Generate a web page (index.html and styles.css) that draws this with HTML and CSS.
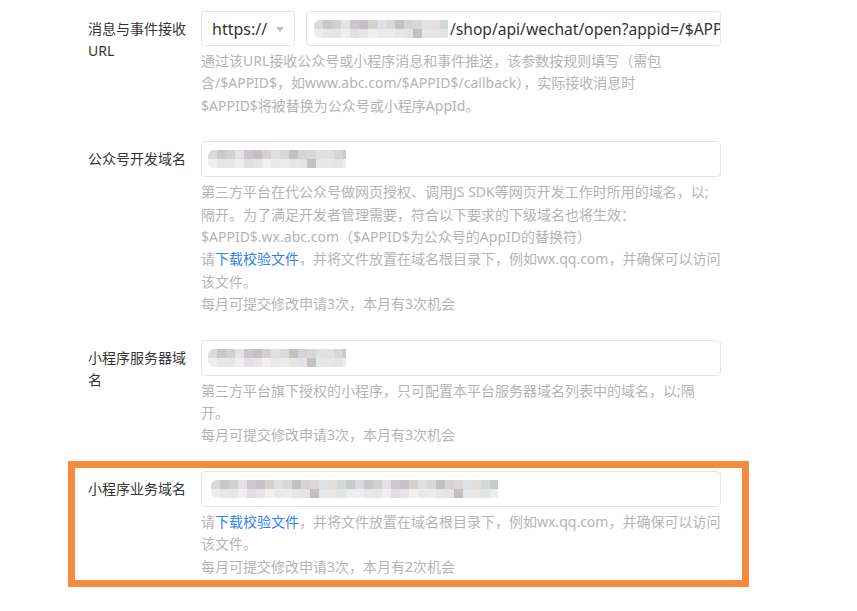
FILE: index.html
```html
<!DOCTYPE html>
<html lang="zh-CN">
<head>
    <meta charset="UTF-8">
    <meta name="viewport" content="width=device-width, initial-scale=1.0">
    <title>开发配置</title>
    <link rel="stylesheet" href="styles.css">
</head>
<body>

    <div class="form">

        <div class="form-row">
            <div class="form-label">消息与事件接收URL</div>
            <div class="form-control">
                <div class="input-group">
                    <div class="select">
                        <span>https://</span>
                        <i class="select-arrow"></i>
                    </div>
                    <div class="input input-url">
                        <span class="mosaic mosaic-url"></span>
                        <span class="input-text">/shop/api/wechat/open?appid=/$APPID$</span>
                    </div>
                </div>
                <div class="help">
                    <p>通过该URL接收公众号或小程序消息和事件推送，该参数按规则填写（需包含/$APPID$，如www.abc.com/$APPID$/callback），实际接收消息时<br>$APPID$将被替换为公众号或小程序AppId。</p>
                </div>
            </div>
        </div>

        <div class="form-row">
            <div class="form-label">公众号开发域名</div>
            <div class="form-control">
                <div class="input">
                    <span class="mosaic mosaic-short"></span>
                </div>
                <div class="help">
                    <p>第三方平台在代公众号做网页授权、调用JS SDK等网页开发工作时所用的域名，以;隔开。为了满足开发者管理需要，符合以下要求的下级域名也将生效：$APPID$.wx.abc.com（$APPID$为公众号的AppID的替换符）</p>
                    <p>请<a href="#">下载校验文件</a>，并将文件放置在域名根目录下，例如wx.qq.com，并确保可以访问该文件。</p>
                    <p>每月可提交修改申请3次，本月有3次机会</p>
                </div>
            </div>
        </div>

        <div class="form-row">
            <div class="form-label">小程序服务器域名</div>
            <div class="form-control">
                <div class="input">
                    <span class="mosaic mosaic-short"></span>
                </div>
                <div class="help">
                    <p>第三方平台旗下授权的小程序，只可配置本平台服务器域名列表中的域名，以;隔开。</p>
                    <p>每月可提交修改申请3次，本月有3次机会</p>
                </div>
            </div>
        </div>

        <div class="form-row marked">
            <div class="form-label">小程序业务域名</div>
            <div class="form-control">
                <div class="input">
                    <span class="mosaic mosaic-long"></span>
                </div>
                <div class="help">
                    <p>请<a href="#">下载校验文件</a>，并将文件放置在域名根目录下，例如wx.qq.com，并确保可以访问该文件。</p>
                    <p>每月可提交修改申请3次，本月有2次机会</p>
                </div>
            </div>
        </div>

    </div>

</body>
</html>
```

FILE: styles.css
```css
body {
    font-family: "Noto Sans", "Noto Sans CJK SC", sans-serif;
    font-size: 14px;
    color: #353535;
    background-color: #ffffff;
    margin: 0;
    padding: 0;
}

.form {
    padding: 11px 0 0 88px;
}

.form-row {
    display: flex;
    width: 633px;
    margin-bottom: 24px;
    position: relative;
}

.form-label {
    width: 100px;
    margin-right: 13px;
    padding-top: 7px;
    line-height: 22px;
    flex-shrink: 0;
}

.form-control {
    width: 520px;
}

.input-group {
    display: flex;
}

.select {
    width: 94px;
    height: 35px;
    box-sizing: border-box;
    border: 1px solid #e3e3e3;
    border-radius: 4px;
    margin-right: 11px;
    padding-left: 10px;
    display: flex;
    align-items: center;
    font-size: 16px;
    color: #333;
    position: relative;
}

.select-arrow {
    position: absolute;
    right: 10px;
    top: 15px;
    width: 0;
    height: 0;
    border-left: 4px solid transparent;
    border-right: 4px solid transparent;
    border-top: 5px solid #bdbdbd;
}

.input {
    height: 36px;
    box-sizing: border-box;
    border: 1px solid #e4e4e4;
    border-radius: 4px;
    padding: 0 10px 0 6px;
    display: flex;
    align-items: center;
    overflow: hidden;
}

.input-url {
    flex: 1;
    height: 35px;
    padding-left: 7px;
}

.input-text {
    font-size: 15.6px;
    color: #333;
    white-space: nowrap;
}

.mosaic {
    display: block;
    height: 18px;
    flex-shrink: 0;
    border-radius: 6px 0 0 6px;
    filter: blur(0.6px);
    background-image:
        linear-gradient(to right, #dcd9dc 0 9px, #cbc6cb 9px 18px, #d2d1d1 18px 27px, #e3e2e5 27px 36px, #cdc7cd 36px 45px, #c6c0c6 45px 54px, #d4d1cf 54px 63px, #e0dfe3 63px 72px, #dbd8dc 72px 81px, #c4c2be 81px 90px, #d6d3d8 90px 99px, #dbd7d5 99px 108px, #dfe2e4 108px 117px, #e2dfde 117px 126px, #d3d7d8 126px 135px, #c9c8cc 135px 144px),
        linear-gradient(to right, #eeedee 0 9px, #e9e6e9 9px 18px, #e4e6e8 18px 27px, #efeef0 27px 36px, #e2dfe2 36px 45px, #e6e4e6 45px 54px, #f0f0ef 54px 63px, #e9e8eb 63px 72px, #ecebec 72px 81px, #e8e6e3 81px 90px, #e5e3e3 90px 99px, #c2c0c2 99px 108px, #e4e8ea 108px 117px, #e7e5e6 117px 126px, #e1e5e6 126px 135px, #ededee 135px 144px);
    background-size: 144px 50%, 144px 50%;
    background-position: 0 0, 0 100%;
    background-repeat: repeat-x;
}

.mosaic-url {
    width: 134px;
    margin-right: 2px;
}

.mosaic-short {
    width: 138px;
}

.mosaic-long {
    width: 287px;
    margin-left: 3px;
}

.help {
    margin-top: 4px;
    color: #b4b4b4;
    line-height: 22.4px;
}

.help p {
    margin: 0;
}

.help a {
    color: #2f80ed;
    text-decoration: none;
}

.marked {
    margin-top: 2px;
}

.marked::after {
    content: '';
    position: absolute;
    top: -10px;
    left: -20px;
    right: -28px;
    bottom: -9px;
    border: 7px solid #f68a3c;
    pointer-events: none;
}
```
